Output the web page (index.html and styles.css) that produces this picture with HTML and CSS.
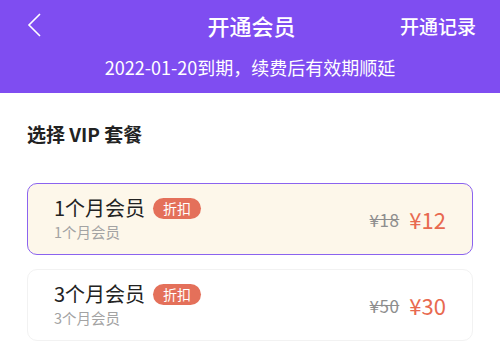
FILE: index.html
```html
<!DOCTYPE html>
<html lang="zh-CN">
<head>
    <meta charset="UTF-8">
    <title>开通会员</title>
    <link rel="stylesheet" href="styles.css">
</head>
<body>
    <div class="header">
        <div class="nav">
            <span class="back">
                <svg width="16" height="24" viewBox="0 0 16 24">
                    <path d="M13 1 L2 12 L13 23" fill="none" stroke="#fff" stroke-width="1.6"/>
                </svg>
            </span>
            <h1>开通会员</h1>
            <span class="record">开通记录</span>
        </div>
        <p class="expire">2022-01-20到期，续费后有效期顺延</p>
    </div>

    <div class="content">
        <h2>选择 VIP 套餐</h2>

        <div class="plan active">
            <div class="plan-info">
                <div class="plan-name">1个月会员 <span class="tag">折扣</span></div>
                <div class="plan-desc">1个月会员</div>
            </div>
            <div class="plan-price">
                <span class="old">¥18</span>
                <span class="now">¥12</span>
            </div>
        </div>

        <div class="plan">
            <div class="plan-info">
                <div class="plan-name">3个月会员 <span class="tag">折扣</span></div>
                <div class="plan-desc">3个月会员</div>
            </div>
            <div class="plan-price">
                <span class="old">¥50</span>
                <span class="now">¥30</span>
            </div>
        </div>
    </div>
</body>
</html>
```

FILE: styles.css
```css
* {
    margin: 0;
    padding: 0;
    box-sizing: border-box;
    font-family: "Noto Sans CJK SC", "Noto Sans", sans-serif;
}

body {
    background: #fff;
    overflow: hidden;
}

.header {
    background: #7f4df1;
    color: #fff;
    height: 93px;
}

.nav {
    height: 50px;
    display: grid;
    grid-template-columns: 1fr auto 1fr;
    align-items: center;
    padding: 0 24px 0 27px;
}

.back {
    display: flex;
    align-items: center;
}

.nav h1 {
    font-size: 22px;
    font-weight: 500;
}

.record {
    justify-self: end;
    font-size: 19px;
    font-weight: 500;
}

.expire {
    text-align: center;
    font-size: 18px;
    line-height: 34px;
}

.content {
    padding: 26px 27px 0;
}

.content h2 {
    font-size: 19px;
    font-weight: 700;
    color: #222;
    line-height: 30px;
    margin-bottom: 34px;
}

.plan {
    display: flex;
    justify-content: space-between;
    align-items: center;
    height: 72px;
    padding: 0 26px 0 26px;
    border: 1px solid #f2f2f2;
    border-radius: 10px;
    margin-bottom: 14px;
    background: #fff;
}

.plan.active {
    background: #fdf7ea;
    border: 1.5px solid #8b63ef;
}

.plan-name {
    font-size: 20px;
    color: #222;
    line-height: 26px;
    display: flex;
    align-items: center;
}

.tag {
    display: inline-block;
    background: #e4705a;
    color: #fff;
    font-size: 14px;
    line-height: 21px;
    padding: 0 10px;
    border-radius: 11px;
    margin-left: 8px;
}

.plan-desc {
    font-size: 14.5px;
    color: #a3a3a3;
    line-height: 22px;
}

.plan-price {
    display: flex;
    align-items: center;
    gap: 10px;
}

.old {
    font-size: 17px;
    letter-spacing: 0.5px;
    color: #8e8e8e;
    text-decoration: line-through;
}

.now {
    font-size: 22px;
    color: #e8694f;
}
```
